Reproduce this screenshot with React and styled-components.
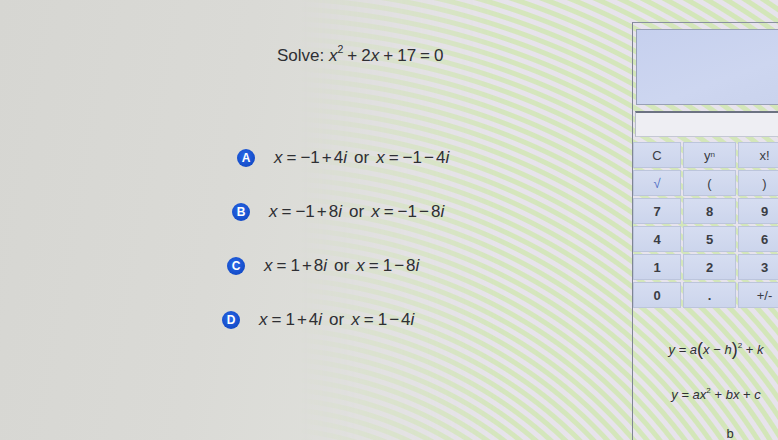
import React from "react";
import styled, { createGlobalStyle } from "styled-components";

const GlobalStyle = createGlobalStyle`
  html, body {
    margin: 0;
    padding: 0;
  }
  body {
    font-family: "Liberation Sans", Arial, sans-serif;
    color: #2e2f33;
  }
`;

// Photographed screen: grey on the left, green/lavender moire on the right
const Page = styled.div`
  position: relative;
  width: 778px;
  height: 440px;
  overflow: hidden;
  display: flex;
  background: linear-gradient(100deg, #d6d6d2 0%, #dadad6 30%, #e0e1dc 55%, #e6e6e6 100%);

  &::before {
    content: "";
    position: absolute;
    inset: 0;
    pointer-events: none;
    background: repeating-radial-gradient(
      circle at 260px 760px,
      #d3e6b9 0px,
      #d3e6b9 4px,
      #e7e3ec 5px,
      #e7e3ec 9px,
      #d3e6b9 10px
    );
    -webkit-mask-image: linear-gradient(90deg, transparent 0px, transparent 300px, rgba(0,0,0,0.9) 500px, #000 700px);
    mask-image: linear-gradient(90deg, transparent 0px, transparent 300px, rgba(0,0,0,0.9) 500px, #000 700px);
  }
`;

const Worksheet = styled.div`
  position: relative;
  flex: none;
  width: 632px;
  padding-top: 45px;
  box-sizing: border-box;
`;

const Question = styled.div`
  padding-left: 277px;
  font-size: 17px;
  line-height: 22px;
  white-space: nowrap;
`;

const Options = styled.div`
  margin-top: 80px;
  display: flex;
  flex-direction: column;
  gap: 33px;
`;

const OptionRow = styled.div`
  display: flex;
  align-items: center;
  height: 21px;
  padding-left: ${(p) => p.$indent}px;
  font-size: 17px;
  white-space: nowrap;
`;

const Badge = styled.span`
  flex: none;
  width: 18px;
  height: 18px;
  border-radius: 50%;
  background: radial-gradient(circle at 45% 40%, #2a6ae8, #1249c6 75%, #0c3aa3);
  color: #fff;
  font-size: 12px;
  font-weight: 700;
  display: flex;
  align-items: center;
  justify-content: center;
  margin-right: 19px;
`;

const V = styled.i`
  font-style: italic;
`;

const Sup = styled.sup`
  font-size: 0.62em;
  vertical-align: 0.75em;
  line-height: 0;
`;

const Op = styled.span`
  margin: 0 ${(p) => p.$space ?? 4}px;
`;

const Word = styled.span`
  margin: 0 7px;
`;

const CalcPanel = styled.div`
  position: relative;
  flex: none;
  width: 172px;
  margin-top: 22px;
  border-left: 1px solid #7f8594;
  border-top: 1px solid #8a90a0;
  display: flex;
  flex-direction: column;

  & > * {
    flex: none;
  }
`;

const Display = styled.div`
  height: 74px;
  margin: 6px 0 0 3px;
  background: linear-gradient(160deg, #c6d0ee, #cdd6f0 60%, #c9d2ec);
  border: 1px solid #98a0b6;
  border-right: none;
`;

const Entry = styled.div`
  height: 23px;
  margin: 6px 0 0 2px;
  background: #eeeef3;
  border-top: 2px solid #6c7282;
  border-left: 1px solid #b8bcc8;
  border-bottom: 1px solid #c4c8d4;
`;

const Keypad = styled.div`
  margin-top: 5px;
  display: grid;
  grid-template-columns: 48px 53px 53px;
  grid-auto-rows: 26px;
  gap: 2px;
`;

const Key = styled.div`
  display: flex;
  align-items: center;
  justify-content: center;
  background: linear-gradient(180deg, #d6ddf1 0%, #ccd5ec 100%);
  border: 1px solid #bcc5dc;
  font-size: 13px;
  font-weight: ${(p) => (p.$digit ? 700 : 400)};
  color: ${(p) => p.$color || "#3b3d44"};
`;

const Formulas = styled.div`
  display: flex;
  flex-direction: column;
  align-items: center;
  padding-right: 6px;
  margin-top: 33px;
  gap: 28px;
  font-size: 13px;
  color: #2f3035;
  white-space: nowrap;
`;

const Formula = styled.div`
  line-height: 17px;
  padding-left: ${(p) => p.$shift || 0}px;
  margin-top: ${(p) => p.$pull || 0}px;
`;

const Paren = styled.span`
  font-size: 18px;
  vertical-align: -1px;
`;

const keys = [
  { label: "C" },
  { label: (<>y<Sup>n</Sup></>) },
  { label: "x!" },
  { label: "√", color: "#4b6cc4" },
  { label: "(" },
  { label: ")" },
  { label: "7", digit: true },
  { label: "8", digit: true },
  { label: "9", digit: true },
  { label: "4", digit: true },
  { label: "5", digit: true },
  { label: "6", digit: true },
  { label: "1", digit: true },
  { label: "2", digit: true },
  { label: "3", digit: true },
  { label: "0", digit: true },
  { label: ".", digit: true },
  { label: "+/-" },
];

const answers = [
  { letter: "A", a: "−1", s: "4" },
  { letter: "B", a: "−1", s: "8" },
  { letter: "C", a: "1", s: "8" },
  { letter: "D", a: "1", s: "4" },
];

const Root = ({ a, sign, s }) => (
  <>
    <V>x</V>
    <Op>=</Op>
    {a}
    <Op $space={2}>{sign}</Op>
    {s}
    <V>i</V>
  </>
);

export default function App() {
  return (
    <>
      <GlobalStyle />
      <Page>
        <Worksheet>
          <Question>
            Solve: <V>x</V>
            <Sup>2</Sup>
            <Op>+</Op>2<V>x</V>
            <Op>+</Op>17<Op>=</Op>0
          </Question>
          <Options>
            {answers.map((o, i) => (
              <OptionRow key={o.letter} $indent={237 - i * 5}>
                <Badge>{o.letter}</Badge>
                <Root a={o.a} sign="+" s={o.s} />
                <Word>or</Word>
                <Root a={o.a} sign="−" s={o.s} />
              </OptionRow>
            ))}
          </Options>
        </Worksheet>
        <CalcPanel>
          <Display />
          <Entry />
          <Keypad>
            {keys.map((k, i) => (
              <Key key={i} $digit={k.digit} $color={k.color}>
                {k.label}
              </Key>
            ))}
          </Keypad>
          <Formulas>
            <Formula>
              <V>y</V> = <V>a</V>
              <Paren>(</Paren>
              <V>x</V> − <V>h</V>
              <Paren>)</Paren>
              <Sup>2</Sup> + <V>k</V>
            </Formula>
            <Formula>
              <V>y</V> = <V>ax</V>
              <Sup>2</Sup> + <V>bx</V> + <V>c</V>
            </Formula>
            <Formula $shift={28} $pull={-6}>b</Formula>
          </Formulas>
        </CalcPanel>
      </Page>
    </>
  );
}
